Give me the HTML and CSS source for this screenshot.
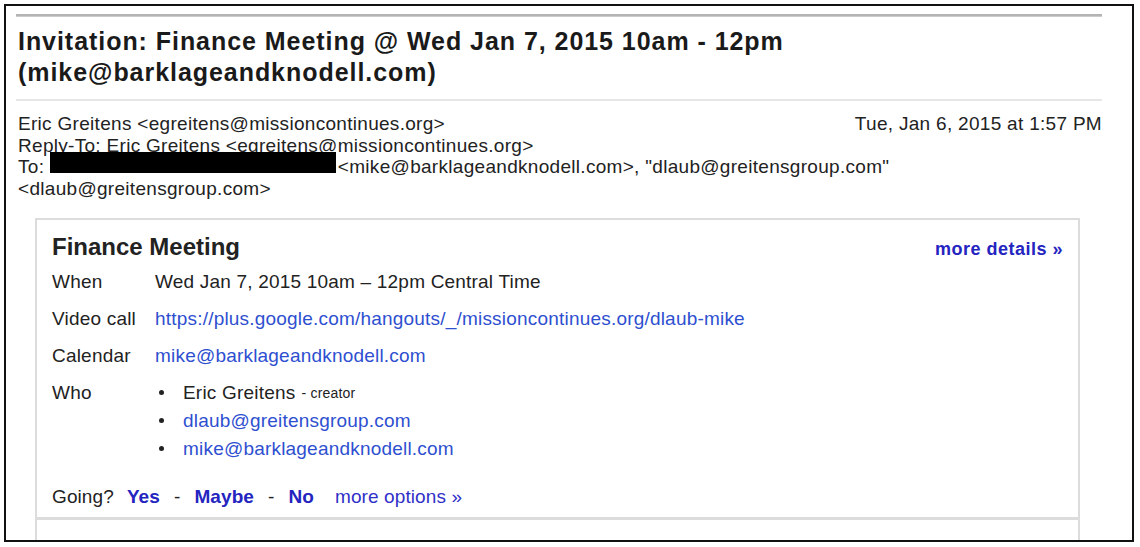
FILE: index.html
```html
<!DOCTYPE html>
<html>
<head>
<meta charset="utf-8">
<title>Invitation: Finance Meeting</title>
<link rel="stylesheet" href="styles.css">
</head>
<body>
<div class="frame">
  <div class="page">
    <div class="rule rule-top"></div>
    <h1 class="subject">Invitation: Finance Meeting @ Wed Jan 7, 2015 10am - 12pm<br>(mike@barklageandknodell.com)</h1>
    <div class="rule rule-light"></div>
    <div class="header">
      <div class="from-row">
        <span>Eric Greitens &lt;egreitens@missioncontinues.org&gt;</span>
        <span class="date">Tue, Jan 6, 2015 at 1:57 PM</span>
      </div>
      <div>Reply-To: Eric Greitens &lt;egreitens@missioncontinues.org&gt;</div>
      <div>To: <span class="redact"></span>&lt;mike@barklageandknodell.com&gt;, "dlaub@greitensgroup.com"<br>&lt;dlaub@greitensgroup.com&gt;</div>
    </div>
    <div class="card">
      <div class="card-head">
        <span class="event-title">Finance Meeting</span>
        <a class="more-details" href="#">more details »</a>
      </div>
      <div class="details">
        <div class="label">When</div>
        <div class="value">Wed Jan 7, 2015 10am – 12pm Central Time</div>
        <div class="label">Video call</div>
        <div class="value"><a class="link" href="#">https://plus.google.com/hangouts/_/missioncontinues.org/dlaub-mike</a></div>
        <div class="label">Calendar</div>
        <div class="value"><a class="link" href="#">mike@barklageandknodell.com</a></div>
        <div class="label">Who</div>
        <div class="value">
          <ul class="who">
            <li>Eric Greitens<span class="role"> - creator</span></li>
            <li><a class="link" href="#">dlaub@greitensgroup.com</a></li>
            <li><a class="link" href="#">mike@barklageandknodell.com</a></li>
          </ul>
        </div>
      </div>
      <div class="going">
        <span class="going-label">Going?</span>
        <a class="rsvp" href="#">Yes</a>
        <span class="sep">-</span>
        <a class="rsvp" href="#">Maybe</a>
        <span class="sep">-</span>
        <a class="rsvp" href="#">No</a>
        <a class="more-options" href="#">more options »</a>
      </div>
    </div>
    <div class="card-next"></div>
  </div>
</div>
</body>
</html>
```
FILE: styles.css
```css
html, body {
  margin: 0;
  padding: 0;
  background: #ffffff;
}

body {
  font-family: "Liberation Sans", Arial, sans-serif;
  color: #222222;
}

.frame {
  margin: 4px 0 0 4px;
  width: 1126px;
  height: 534px;
  border: 2px solid #111111;
  overflow: hidden;
  background: #ffffff;
}

.page {
  padding: 8px 30px 0 10px;
}

.rule {
  height: 3px;
}

.rule-top {
  background: linear-gradient(#b4b4b4, #b4b4b4 66%, #e4e4e4);
}

.rule-light {
  height: 2px;
  margin-top: 11px;
  background: #e6e6e6;
}

.subject {
  margin: 9px 0 0 2px;
  font-size: 25px;
  line-height: 31px;
  font-weight: bold;
  letter-spacing: 0.95px;
  color: #1a1a1a;
}

.header {
  margin-top: 12px;
  padding-left: 2px;
  font-size: 19px;
  line-height: 21.7px;
  letter-spacing: 0.3px;
  color: #222222;
}

.from-row {
  display: flex;
  justify-content: space-between;
}

.redact {
  display: inline-block;
  width: 286px;
  height: 21px;
  margin-top: -4px;
  margin-right: 2px;
  background: #000000;
  vertical-align: baseline;
}

.card {
  margin: 18px 22px 0 19px;
  border: 2px solid #dcdcdc;
  border-bottom-width: 3px;
  padding: 13px 15px 9px 15px;
}

.card-next {
  margin: 0 22px 0 19px;
  height: 60px;
  border-left: 2px solid #dcdcdc;
  border-right: 2px solid #dcdcdc;
}

.card-head {
  display: flex;
  justify-content: space-between;
  align-items: baseline;
}

.event-title {
  font-size: 24px;
  line-height: 28px;
  font-weight: bold;
  color: #222222;
}

.more-details {
  font-size: 18px;
  font-weight: bold;
  letter-spacing: 0.5px;
  color: #2424c0;
  text-decoration: none;
}

.details {
  display: grid;
  grid-template-columns: 103px 1fr;
  row-gap: 15px;
  margin-top: 10px;
  font-size: 19px;
  line-height: 22px;
  letter-spacing: 0.2px;
}

.label {
  color: #222222;
}

.value {
  color: #222222;
}

.link {
  color: #2e4fd0;
  text-decoration: none;
}

.who {
  list-style: none;
  margin: 0;
  padding: 0;
  display: flex;
  flex-direction: column;
  gap: 6px;
}

.who li {
  display: flex;
  align-items: center;
}

.who li::before {
  content: "";
  display: inline-block;
  width: 5px;
  height: 5px;
  border-radius: 50%;
  background: #222222;
  margin-left: 4px;
  margin-right: 19px;
  flex: none;
}

.role {
  font-size: 14px;
  margin-left: 2px;
  white-space: pre;
}

.going {
  display: flex;
  align-items: baseline;
  margin-top: 26px;
  font-size: 19px;
  line-height: 22px;
  letter-spacing: 0.1px;
}

.going-label {
  margin-right: 13px;
}

.rsvp {
  font-weight: bold;
  color: #2424c0;
  text-decoration: none;
}

.sep {
  margin: 0 14px;
  color: #222222;
}

.more-options {
  margin-left: 21px;
  color: #3030c8;
  text-decoration: none;
}
```
